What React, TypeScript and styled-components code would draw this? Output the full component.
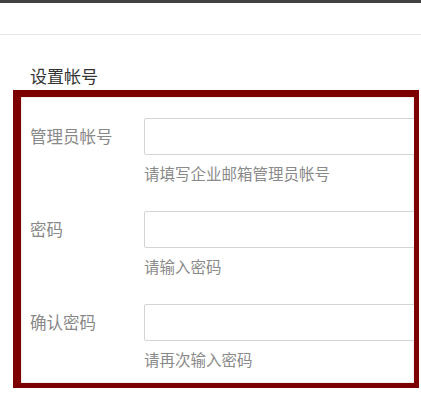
import React from 'react';
import { styled, createGlobalStyle } from 'styled-components';

const GlobalStyle = createGlobalStyle`
  html, body {
    margin: 0;
    padding: 0;
    background: #fff;
    font-family: "Noto Sans CJK SC", "Liberation Sans", sans-serif;
  }
`;

const Page = styled.div`
  width: 421px;
  height: 406px;
  overflow: hidden;
  background: #fff;
`;

const TopBar = styled.div`
  height: 3px;
  background: #414141;
`;

const Header = styled.div`
  height: 31px;
  border-bottom: 1px solid #e6e6e6;
`;

const SectionTitle = styled.div`
  padding: 30px 0 0 30px;
  height: 25px;
  font-size: 17px;
  line-height: 22px;
  color: #333;
`;

const Highlight = styled.div`
  margin-left: 13px;
  width: 384px;
  border-style: solid;
  border-color: #7d0000;
  border-width: 7px 5px 5px 8px;
  padding: 21px 0 14px 9px;
  overflow: hidden;
  box-shadow: inset 0 0 2px rgba(125, 0, 0, 0.25);
`;

const Row = styled.div`
  display: grid;
  grid-template-columns: 114px 1fr;
  & + & {
    margin-top: 28px;
  }
`;

const Label = styled.label`
  font-size: 16.5px;
  line-height: 37px;
  color: #888;
`;

const Field = styled.div`
  display: flex;
  flex-direction: column;
  gap: 8px;
`;

const Input = styled.input`
  box-sizing: border-box;
  width: calc(100% + 6px);
  height: 37px;
  border: 1px solid #d4d4d4;
  border-radius: 2px;
  background: #fff;
  outline: none;
`;

const Hint = styled.div`
  font-size: 15.5px;
  line-height: 20px;
  color: #8a8a8a;
  white-space: nowrap;
`;

const fields = [
  { label: '管理员帐号', hint: '请填写企业邮箱管理员帐号', type: 'text' },
  { label: '密码', hint: '请输入密码', type: 'password' },
  { label: '确认密码', hint: '请再次输入密码', type: 'password' },
];

function App() {
  return (
    <Page>
      <GlobalStyle />
      <TopBar />
      <Header />
      <SectionTitle>设置帐号</SectionTitle>
      <Highlight>
        {fields.map((f) => (
          <Row key={f.label}>
            <Label>{f.label}</Label>
            <Field>
              <Input type={f.type} />
              <Hint>{f.hint}</Hint>
            </Field>
          </Row>
        ))}
      </Highlight>
    </Page>
  );
}

export default App;
